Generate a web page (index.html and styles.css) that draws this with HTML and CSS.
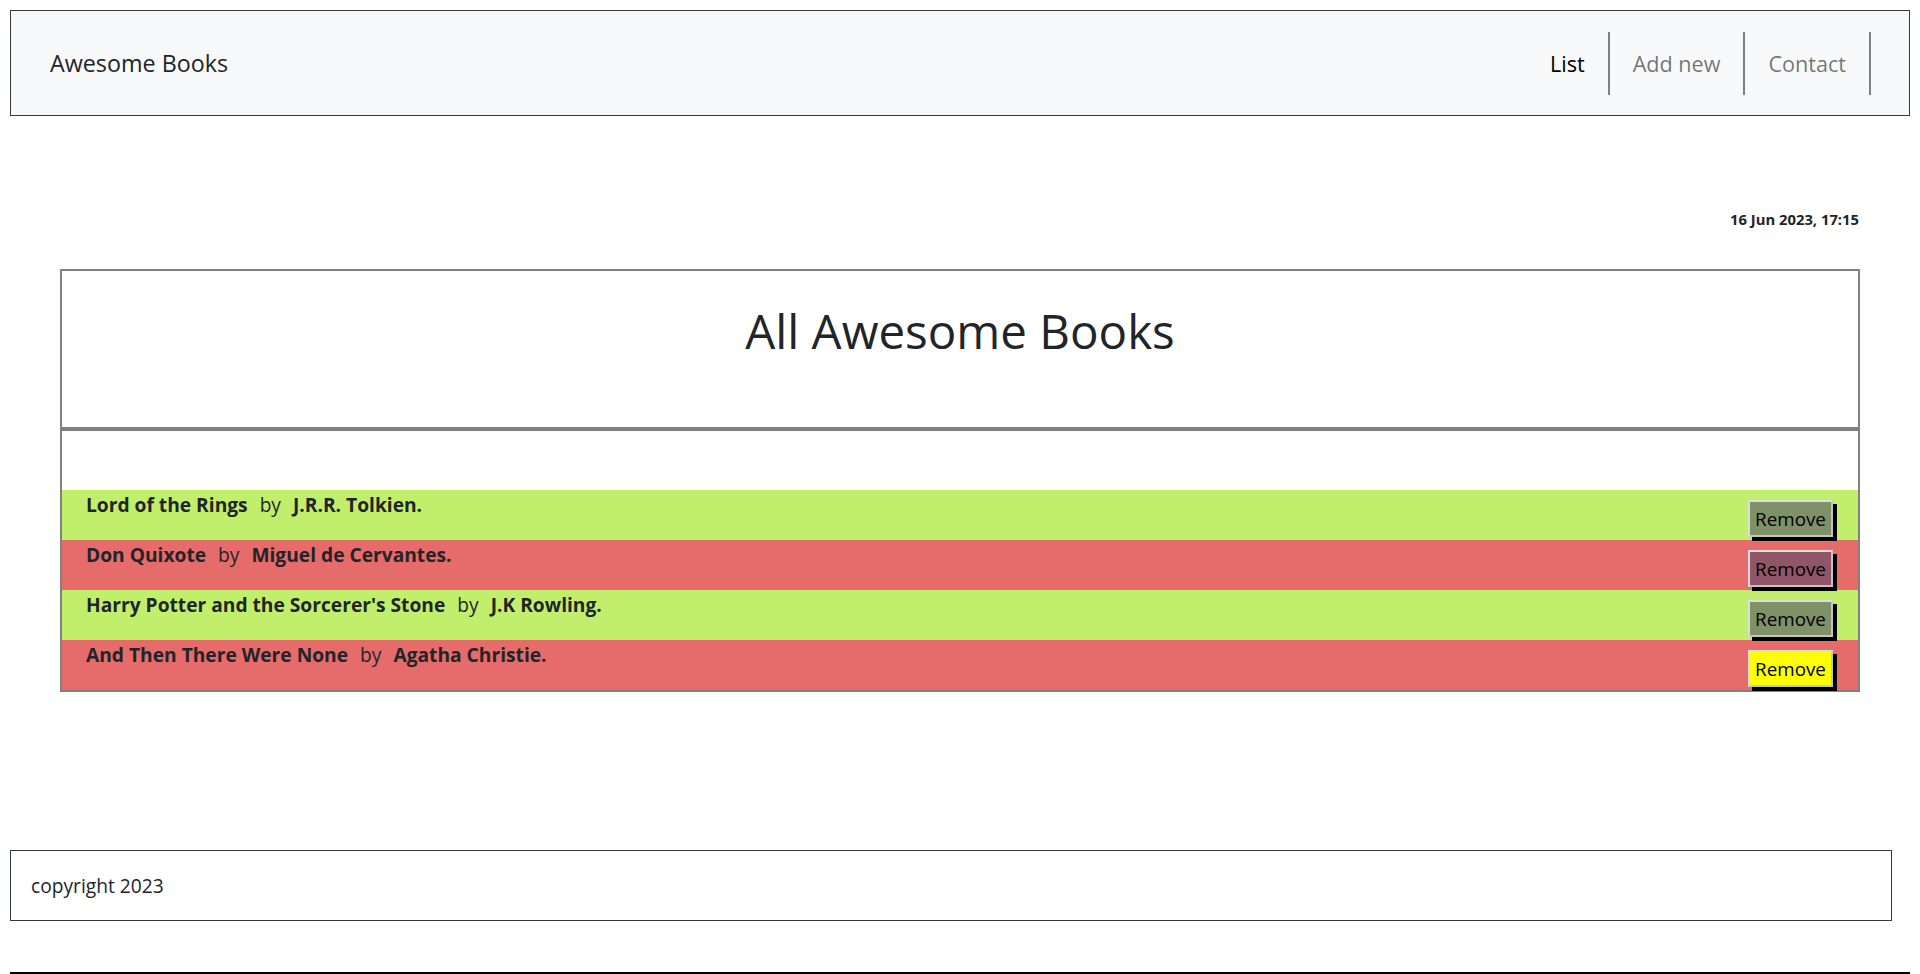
FILE: index.html
```html
<!DOCTYPE html>
<html lang="en">
<head>
<meta charset="utf-8">
<title>Awesome Books</title>
<link rel="stylesheet" href="styles.css">
</head>
<body>
<nav class="navbar">
  <a class="brand" href="#">Awesome Books</a>
  <ul class="nav-links">
    <li><a class="nav-link active" href="#">List</a></li>
    <li><a class="nav-link" href="#">Add new</a></li>
    <li><a class="nav-link" href="#">Contact</a></li>
  </ul>
</nav>
<main class="main">
  <div class="date">16 Jun 2023, 17:15</div>
  <section class="books-box">
    <header class="box-header">
      <h1 class="box-title">All Awesome Books</h1>
    </header>
    <ul class="book-list">
      <li class="book even">
        <p class="book-text"><span class="title">Lord of the Rings</span><span class="by">by</span><span class="author">J.R.R. Tolkien.</span></p>
        <button class="remove">Remove</button>
      </li>
      <li class="book odd">
        <p class="book-text"><span class="title">Don Quixote</span><span class="by">by</span><span class="author">Miguel de Cervantes.</span></p>
        <button class="remove">Remove</button>
      </li>
      <li class="book even">
        <p class="book-text"><span class="title">Harry Potter and the Sorcerer's Stone</span><span class="by">by</span><span class="author">J.K Rowling.</span></p>
        <button class="remove">Remove</button>
      </li>
      <li class="book odd">
        <p class="book-text"><span class="title">And Then There Were None</span><span class="by">by</span><span class="author">Agatha Christie.</span></p>
        <button class="remove remove-hover">Remove</button>
      </li>
    </ul>
  </section>
</main>
<footer class="footer">copyright 2023</footer>
<div class="bottom-line"></div>
</body>
</html>
```

FILE: styles.css
```css
* { box-sizing: border-box; }

html, body { background: #fff; }

body {
  margin: 10px 10px 0;
  font-family: "Open Sans", "Noto Sans", sans-serif;
  color: #212529;
  font-size: 19.2px;
  line-height: 30px;
}

.navbar {
  height: 106px;
  border: 1px solid #343a40;
  background: #f8f9fa;
  display: flex;
  align-items: center;
  justify-content: space-between;
  padding: 0 38px 0 39px;
}

.brand {
  font-size: 23.3px;
  line-height: 30px;
  color: #212529;
  text-decoration: none;
}

.nav-links {
  list-style: none;
  margin: 0;
  padding: 0;
  display: flex;
}

.nav-link {
  display: block;
  padding: 0 23px;
  font-size: 21.6px;
  line-height: 63px;
  border-right: 2px solid #808080;
  color: rgba(0, 0, 0, 0.55);
  text-decoration: none;
}

.nav-link.active { color: #000; }

.main {
  margin: 0 50px 0 50px;
}

.date {
  margin-top: 92px;
  text-align: right;
  font-size: 14.8px;
  font-weight: 700;
  line-height: 22px;
  padding-right: 1px;
}

.books-box {
  margin-top: 39px;
  border: 2px solid #808080;
}

.box-header {
  padding: 30px 0 66px;
  border-bottom: 4px solid #808080;
}

.box-title {
  margin: 0;
  text-align: center;
  font-size: 47.5px;
  font-weight: 400;
  line-height: 60px;
}

.book-list {
  list-style: none;
  margin: 0;
  padding: 59px 0 0;
}

.book {
  height: 50px;
  display: flex;
  justify-content: space-between;
  align-items: flex-start;
  padding: 0 25px 0 24px;
}

.book.even { background: #c1ef6b; }
.book.odd { background: #e66b6b; }

.book-text {
  margin: 0;
  line-height: 30px;
}

.title, .author { font-weight: 700; }

.by { margin: 0 12px; }

.remove {
  margin-top: 10px;
  width: 85px;
  height: 37px;
  padding: 0;
  font-family: "Open Sans", "Noto Sans", sans-serif;
  font-size: 18.8px;
  line-height: 30px;
  color: #000;
  background: rgba(72, 68, 98, 0.55);
  border: 2px solid #dcdcdc;
  border-right-color: #c4c4c4;
  border-bottom-color: #c4c4c4;
  box-shadow: 4px 4px 0 #000;
}

.remove-hover { background: #ffff00; }

.footer {
  margin-top: 158px;
  margin-right: 18px;
  border: 1px solid #343a40;
  padding: 20px 20px;
  height: 71px;
  line-height: 29px;
}

.bottom-line {
  margin: 51px -10px 0;
  height: 2px;
  background: #000;
}
```
